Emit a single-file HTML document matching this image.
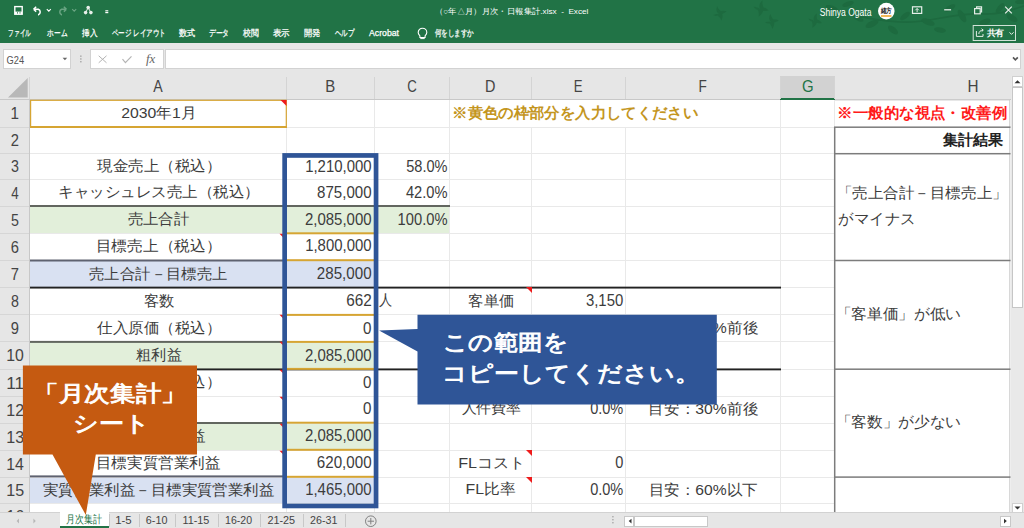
<!DOCTYPE html>
<html><head><meta charset="utf-8">
<style>
*{margin:0;padding:0;box-sizing:border-box}
html,body{width:1024px;height:528px;overflow:hidden;background:#fff}
body{position:relative;font-family:"Liberation Sans",sans-serif;color:#333}
.ab{position:absolute}
svg{position:absolute;left:0;top:0;overflow:visible}
</style></head><body>

<div class="ab" style="left:0px;top:0px;width:1024px;height:43px;background:#217346;"></div>
<svg width="1024" height="43" viewBox="0 0 1024 43">
<g fill="#1d6a3f"><path transform="translate(719,14) rotate(-20) scale(1.0)" d="M0 0 C -2 -3 -1 -6 1 -8 C 1 -5 2 -3 3 -2 C 5 -2 7 -1 8 0 C 6 1 4 1 3 1 C 3 3 2 5 0 7 C 0 4 -1 2 -2 1 C -4 1 -5 0 -6 -1 C -4 -1 -2 -1 0 0z"/><path transform="translate(760,9) rotate(10) scale(1.1)" d="M0 0 C -2 -3 -1 -6 1 -8 C 1 -5 2 -3 3 -2 C 5 -2 7 -1 8 0 C 6 1 4 1 3 1 C 3 3 2 5 0 7 C 0 4 -1 2 -2 1 C -4 1 -5 0 -6 -1 C -4 -1 -2 -1 0 0z"/><path transform="translate(771,22) rotate(-10) scale(1.0)" d="M0 0 C -2 -3 -1 -6 1 -8 C 1 -5 2 -3 3 -2 C 5 -2 7 -1 8 0 C 6 1 4 1 3 1 C 3 3 2 5 0 7 C 0 4 -1 2 -2 1 C -4 1 -5 0 -6 -1 C -4 -1 -2 -1 0 0z"/><path transform="translate(814,21) rotate(15) scale(1.0)" d="M0 0 C -2 -3 -1 -6 1 -8 C 1 -5 2 -3 3 -2 C 5 -2 7 -1 8 0 C 6 1 4 1 3 1 C 3 3 2 5 0 7 C 0 4 -1 2 -2 1 C -4 1 -5 0 -6 -1 C -4 -1 -2 -1 0 0z"/><path d="M826 6 C 845 14, 870 20, 900 22 C 930 24, 950 12, 985 14 C 1005 15, 1015 8, 1024 6" fill="none" stroke="#1d6a3f" stroke-width="1.6"/><ellipse cx="832" cy="8" rx="6" ry="2.5" transform="rotate(20 832 8)"/><ellipse cx="848" cy="4" rx="6" ry="2.5" transform="rotate(-20 848 4)"/><ellipse cx="858" cy="18" rx="6" ry="2.5" transform="rotate(30 858 18)"/><ellipse cx="872" cy="24" rx="7" ry="3" transform="rotate(-25 872 24)"/><ellipse cx="893" cy="30" rx="6" ry="3" transform="rotate(40 893 30)"/><ellipse cx="905" cy="16" rx="6" ry="2.5" transform="rotate(-40 905 16)"/><ellipse cx="928" cy="22" rx="7" ry="3" transform="rotate(20 928 22)"/><ellipse cx="950" cy="8" rx="6" ry="2.5" transform="rotate(-30 950 8)"/><ellipse cx="962" cy="16" rx="7" ry="3" transform="rotate(60 962 16)"/><ellipse cx="985" cy="22" rx="6" ry="3" transform="rotate(-20 985 22)"/><ellipse cx="1000" cy="8" rx="6" ry="2.5" transform="rotate(-50 1000 8)"/><ellipse cx="1012" cy="18" rx="6" ry="3" transform="rotate(30 1012 18)"/><ellipse cx="940" cy="30" rx="6" ry="2.5" transform="rotate(10 940 30)"/><ellipse cx="1020" cy="2" rx="5" ry="2" transform="rotate(0 1020 2)"/></g>
</svg>
<svg width="130" height="22" viewBox="0 0 130 22">
<rect x="14.8" y="6.6" width="7.4" height="7.6" fill="none" stroke="#fff" stroke-width="1.4"/>
<rect x="15" y="11.6" width="7" height="2.6" fill="#fff"/>
<rect x="17" y="12.3" width="1" height="1.2" fill="#217346"/><rect x="19.5" y="12.3" width="1" height="1.2" fill="#217346"/>
<path d="M33.5 9.2 L36.2 6.8 M33.5 9.2 L36.2 11.6 M33.6 9.2 H38.3 a3 3 0 0 1 0 5.6 H38" fill="none" stroke="#fff" stroke-width="1.5"/>
<path d="M46.8 9.2 l2 2 l2 -2" fill="none" stroke="#fff" stroke-width="1.1"/>
<path d="M66.5 9.2 L63.8 6.8 M66.5 9.2 L63.8 11.6 M66.4 9.2 H61.7 a3 3 0 0 0 0 5.6 H62" fill="none" stroke="#6aa583" stroke-width="1.5"/>
<path d="M72.2 9.2 l2 2 l2 -2" fill="none" stroke="#6aa583" stroke-width="1.1"/>
<g fill="#e8f0ea"><circle cx="88.2" cy="7.6" r="1.8"/><circle cx="85.6" cy="12.6" r="1.8"/><circle cx="90.9" cy="12.6" r="1.8"/></g>
<path d="M88.2 7.6 L85.6 12.6 M88.2 7.6 L90.9 12.6" stroke="#e8f0ea" stroke-width="1"/>
<rect x="105.3" y="10" width="3" height="1" fill="#cfe0d5"/><rect x="105.3" y="11.6" width="3" height="1.6" fill="#fff"/>
</svg>
<svg width="1024" height="43" viewBox="0 0 1024 43">
<circle cx="886.3" cy="11.1" r="8.3" fill="#fff"/>
<rect x="881" y="15.2" width="10.5" height="1.6" fill="#f0a830"/>
<rect x="912.5" y="6.8" width="9.2" height="6.6" fill="none" stroke="#e6efe9" stroke-width="1.2"/>
<path d="M917.1 12.2 V8.6 M915.3 10.3 L917.1 8.5 L918.9 10.3" fill="none" stroke="#e6efe9" stroke-width="1"/>
<path d="M944.2 9.8 H951.1" stroke="#e6efe9" stroke-width="1.3"/>
<rect x="974.6" y="8.6" width="5.6" height="5.2" fill="none" stroke="#e6efe9" stroke-width="1.2"/>
<path d="M976.6 8.4 V6.9 H981.6 V11.9 H980.4" fill="none" stroke="#e6efe9" stroke-width="1.1"/>
<path d="M1005.2 6.6 L1011.8 13.4 M1011.8 6.6 L1005.2 13.4" stroke="#e6efe9" stroke-width="1.2"/>
<rect x="973.2" y="25.5" width="42.3" height="15" fill="none" stroke="#d0e2d7" stroke-width="1"/>
<path d="M976.4 31 V36.4 H983 V34" fill="none" stroke="#e6efe9" stroke-width="1"/>
<path d="M978.8 34 C 979 31.5 980.5 30.2 983.2 30.2 M981.6 28.7 L983.2 30.2 L981.6 31.7" fill="none" stroke="#e6efe9" stroke-width="1"/>
<path d="M1009.5 32.3 L1011.5 34.4 L1013.6 32.3" fill="none" stroke="#e6efe9" stroke-width="1"/>
<path d="M418.5 28.2 a4.3 4.3 0 0 1 4.3 4.3 c0 1.6 -1 2.6 -1.7 3.4 v1.6 h-5.2 v-1.6 c-0.7 -0.8 -1.7 -1.8 -1.7 -3.4 a4.3 4.3 0 0 1 4.3 -4.3z" fill="none" stroke="#fff" stroke-width="1.1" transform="translate(4,0)"/>
<path d="M420.3 38.6 h4.4" stroke="#fff" stroke-width="1"/>
</svg>
<div class="ab" style="left:0px;top:43px;width:1024px;height:33px;background:#e6e6e6;"></div>
<div class="ab" style="left:3px;top:49px;width:68px;height:20px;background:#fff;border:1px solid #d2d2d2"></div>
<svg width="100" height="76" viewBox="0 0 100 76"><path d="M62.6 57.8 H67.2 L64.9 60.3z" fill="#666"/><rect x="80.2" y="55.5" width="1.3" height="1.3" fill="#9a9a9a"/><rect x="80.2" y="58.3" width="1.3" height="1.3" fill="#9a9a9a"/><rect x="80.2" y="61.1" width="1.3" height="1.3" fill="#9a9a9a"/></svg>
<div class="ab" style="left:90px;top:49px;width:74px;height:20px;background:#fff;border:1px solid #d2d2d2"></div>
<svg width="180" height="76" viewBox="0 0 180 76">
<path d="M98.7 55.8 L106.5 62.8 M106.5 55.8 L98.7 62.8" stroke="#b4b4b4" stroke-width="1"/>
<path d="M122.5 59.2 L125.4 62.6 L131.5 56.3" fill="none" stroke="#b4b4b4" stroke-width="1.2"/>
</svg>
<div class="ab" style="left:165px;top:49px;width:856px;height:20px;background:#fff;border:1px solid #d2d2d2"></div>
<svg width="1024" height="76" viewBox="0 0 1024 76"><path d="M1013 57.4 L1015.4 59.9 L1017.8 57.4" fill="none" stroke="#555" stroke-width="1.6"/></svg>
<div class="ab" style="left:0px;top:76px;width:1011px;height:23px;background:#e6e6e6;"></div>
<div class="ab" style="left:0px;top:99px;width:1011px;height:1px;background:#c8c8c8;"></div>
<svg width="30" height="100" viewBox="0 0 30 100"><path d="M8 97.5 L27.7 97.5 L27.7 78z" fill="#b8b8b8"/></svg>
<div class="ab" style="left:780px;top:76px;width:55px;height:23px;background:#d2d2d2;"></div>
<div class="ab" style="left:780px;top:98px;width:55px;height:2px;background:#217346;"></div>
<div class="ab" style="left:286px;top:77px;width:1px;height:22px;background:#d4d4d4;"></div>
<div class="ab" style="left:374px;top:77px;width:1px;height:22px;background:#d4d4d4;"></div>
<div class="ab" style="left:449px;top:77px;width:1px;height:22px;background:#d4d4d4;"></div>
<div class="ab" style="left:531px;top:77px;width:1px;height:22px;background:#d4d4d4;"></div>
<div class="ab" style="left:625px;top:77px;width:1px;height:22px;background:#d4d4d4;"></div>
<div class="ab" style="left:780px;top:77px;width:1px;height:22px;background:#d4d4d4;"></div>
<div class="ab" style="left:834px;top:77px;width:1px;height:22px;background:#d4d4d4;"></div>
<div class="ab" style="left:29px;top:77px;width:1px;height:22px;background:#d4d4d4;"></div>
<div class="ab" style="left:0px;top:100px;width:30px;height:412px;background:#e6e6e6;"></div>
<div class="ab" style="left:29px;top:100px;width:1px;height:412px;background:#c8c8c8;"></div>
<div class="ab" style="left:0px;top:127px;width:29px;height:1px;background:#d6d6d6;"></div>
<div class="ab" style="left:0px;top:153px;width:29px;height:1px;background:#d6d6d6;"></div>
<div class="ab" style="left:0px;top:179px;width:29px;height:1px;background:#d6d6d6;"></div>
<div class="ab" style="left:0px;top:206px;width:29px;height:1px;background:#d6d6d6;"></div>
<div class="ab" style="left:0px;top:233px;width:29px;height:1px;background:#d6d6d6;"></div>
<div class="ab" style="left:0px;top:260px;width:29px;height:1px;background:#d6d6d6;"></div>
<div class="ab" style="left:0px;top:287px;width:29px;height:1px;background:#d6d6d6;"></div>
<div class="ab" style="left:0px;top:314px;width:29px;height:1px;background:#d6d6d6;"></div>
<div class="ab" style="left:0px;top:341px;width:29px;height:1px;background:#d6d6d6;"></div>
<div class="ab" style="left:0px;top:369px;width:29px;height:1px;background:#d6d6d6;"></div>
<div class="ab" style="left:0px;top:396px;width:29px;height:1px;background:#d6d6d6;"></div>
<div class="ab" style="left:0px;top:423px;width:29px;height:1px;background:#d6d6d6;"></div>
<div class="ab" style="left:0px;top:450px;width:29px;height:1px;background:#d6d6d6;"></div>
<div class="ab" style="left:0px;top:477px;width:29px;height:1px;background:#d6d6d6;"></div>
<div class="ab" style="left:0px;top:503px;width:29px;height:1px;background:#d6d6d6;"></div>
<div class="ab" style="left:30px;top:100px;width:980px;height:412px;background:#fff;"></div>
<div class="ab" style="left:30px;top:207px;width:419px;height:26px;background:#e2efda;"></div>
<div class="ab" style="left:30px;top:261px;width:344px;height:26px;background:#d9e1f2;"></div>
<div class="ab" style="left:30px;top:342px;width:344px;height:27px;background:#e2efda;"></div>
<div class="ab" style="left:30px;top:424px;width:344px;height:26px;background:#e2efda;"></div>
<div class="ab" style="left:30px;top:478px;width:344px;height:25px;background:#d9e1f2;"></div>
<div class="ab" style="left:30px;top:127px;width:980px;height:1px;background:#e9e9e9;"></div>
<div class="ab" style="left:30px;top:153px;width:980px;height:1px;background:#e9e9e9;"></div>
<div class="ab" style="left:30px;top:179px;width:980px;height:1px;background:#e9e9e9;"></div>
<div class="ab" style="left:30px;top:206px;width:980px;height:1px;background:#e9e9e9;"></div>
<div class="ab" style="left:30px;top:233px;width:980px;height:1px;background:#e9e9e9;"></div>
<div class="ab" style="left:30px;top:260px;width:980px;height:1px;background:#e9e9e9;"></div>
<div class="ab" style="left:30px;top:287px;width:980px;height:1px;background:#e9e9e9;"></div>
<div class="ab" style="left:30px;top:314px;width:980px;height:1px;background:#e9e9e9;"></div>
<div class="ab" style="left:30px;top:341px;width:980px;height:1px;background:#e9e9e9;"></div>
<div class="ab" style="left:30px;top:369px;width:980px;height:1px;background:#e9e9e9;"></div>
<div class="ab" style="left:30px;top:396px;width:980px;height:1px;background:#e9e9e9;"></div>
<div class="ab" style="left:30px;top:423px;width:980px;height:1px;background:#e9e9e9;"></div>
<div class="ab" style="left:30px;top:450px;width:980px;height:1px;background:#e9e9e9;"></div>
<div class="ab" style="left:30px;top:477px;width:980px;height:1px;background:#e9e9e9;"></div>
<div class="ab" style="left:30px;top:503px;width:980px;height:1px;background:#e9e9e9;"></div>
<div class="ab" style="left:286px;top:100px;width:1px;height:412px;background:#e9e9e9;"></div>
<div class="ab" style="left:374px;top:100px;width:1px;height:412px;background:#e9e9e9;"></div>
<div class="ab" style="left:449px;top:100px;width:1px;height:412px;background:#e9e9e9;"></div>
<div class="ab" style="left:531px;top:127px;width:1px;height:385px;background:#e9e9e9;"></div>
<div class="ab" style="left:625px;top:127px;width:1px;height:385px;background:#e9e9e9;"></div>
<div class="ab" style="left:780px;top:100px;width:1px;height:412px;background:#e9e9e9;"></div>
<div class="ab" style="left:834px;top:100px;width:1px;height:412px;background:#e9e9e9;"></div>
<div class="ab" style="left:835px;top:100px;width:175px;height:412px;background:#fff;"></div>
<svg width="1024" height="528" viewBox="0 0 1024 528"><rect x="30" y="205.00" width="420" height="2" fill="#62665f"/><rect x="30" y="259.50" width="256" height="2" fill="#5f6270"/><rect x="30" y="286.65" width="751" height="1.9" fill="#222222"/><rect x="30" y="340.90" width="256" height="2" fill="#62665f"/><rect x="30" y="368.45" width="751" height="1.9" fill="#222222"/><rect x="30" y="422.00" width="256" height="2" fill="#62665f"/><rect x="30" y="475.40" width="256" height="2" fill="#5f6270"/><rect x="287" y="232.30" width="87" height="2" fill="#d6a533"/><rect x="287" y="259.20" width="87" height="2" fill="#d6a533"/><rect x="287" y="313.90" width="87" height="2" fill="#d6a533"/><rect x="287" y="340.90" width="87" height="2" fill="#d6a533"/><rect x="287" y="367.90" width="87" height="2" fill="#d6a533"/><rect x="287" y="421.70" width="87" height="2" fill="#d6a533"/><rect x="287" y="448.80" width="87" height="2" fill="#d6a533"/><rect x="287" y="475.80" width="87" height="2" fill="#d6a533"/><rect x="30" y="99.70" width="257" height="1.2" fill="#d6a533"/><rect x="30" y="126.00" width="257" height="2" fill="#d6a533"/><rect x="30.00" y="100" width="1.2" height="28" fill="#d6a533"/><rect x="285.70" y="100" width="1.2" height="28" fill="#d6a533"/><rect x="835" y="99.50" width="175" height="1" fill="#d0d0d0"/><rect x="1009.30" y="100" width="1" height="412" fill="#c8c8c8"/><rect x="834" y="126.45" width="176.5" height="1.5" fill="#7c7c7c"/><rect x="834" y="152.95" width="176.5" height="1.5" fill="#7c7c7c"/><rect x="834" y="259.75" width="176.5" height="1.5" fill="#7c7c7c"/><rect x="834" y="368.45" width="176.5" height="1.5" fill="#7c7c7c"/><rect x="834" y="476.35" width="176.5" height="1.5" fill="#7c7c7c"/><rect x="833.95" y="127" width="1.5" height="385" fill="#7c7c7c"/></svg>
<svg width="1024" height="528" viewBox="0 0 1024 528"><path d="M280.5 100 H286.5 V106z" fill="#ee1c1c"/><path d="M279.5 233.8 H285.5 V239.8z" fill="#ee1c1c"/><path d="M279.5 314.8 H285.5 V320.8z" fill="#ee1c1c"/><path d="M279.5 341.8 H285.5 V347.8z" fill="#ee1c1c"/><path d="M279.5 369.8 H285.5 V375.8z" fill="#ee1c1c"/><path d="M279.5 396.8 H285.5 V402.8z" fill="#ee1c1c"/><path d="M279.5 423.8 H285.5 V429.8z" fill="#ee1c1c"/><path d="M279.5 450.8 H285.5 V456.8z" fill="#ee1c1c"/><path d="M526 287 H532 V293z" fill="#ee1c1c"/><path d="M526 450 H532 V456z" fill="#ee1c1c"/><path d="M526 477 H532 V483z" fill="#ee1c1c"/></svg>
<div class="ab" style="left:1011px;top:76px;width:13px;height:436px;background:#e9e9e9;"></div>
<div class="ab" style="left:1012px;top:76px;width:11px;height:11px;background:#fff;border:1px solid #d0d0d0"></div>
<div class="ab" style="left:1012px;top:87px;width:11px;height:221px;background:#fff;border:1px solid #c6c6c6"></div>
<div class="ab" style="left:1012px;top:503px;width:11px;height:10px;background:#fff;border:1px solid #d0d0d0"></div>
<svg width="1024" height="528" viewBox="0 0 1024 528"><path d="M1014.5 83.2 H1020.5 L1017.5 80.2z" fill="#333"/><path d="M1014.5 506.5 H1020.5 L1017.5 509.5z" fill="#333"/></svg>
<div class="ab" style="left:0px;top:512px;width:1024px;height:16px;background:#e6e6e6;"></div>
<div class="ab" style="left:0px;top:512px;width:1024px;height:1px;background:#d2d2d2;"></div>
<div class="ab" style="left:60px;top:512px;width:49px;height:16px;background:#fff;"></div>
<div class="ab" style="left:60px;top:526px;width:49px;height:2px;background:#217346;"></div>
<div class="ab" style="left:109px;top:514px;width:1px;height:13px;background:#c8c8c8;"></div>
<div class="ab" style="left:139px;top:514px;width:1px;height:13px;background:#c8c8c8;"></div>
<div class="ab" style="left:175px;top:514px;width:1px;height:13px;background:#c8c8c8;"></div>
<div class="ab" style="left:218px;top:514px;width:1px;height:13px;background:#c8c8c8;"></div>
<div class="ab" style="left:260px;top:514px;width:1px;height:13px;background:#c8c8c8;"></div>
<div class="ab" style="left:303px;top:514px;width:1px;height:13px;background:#c8c8c8;"></div>
<div class="ab" style="left:345px;top:514px;width:1px;height:13px;background:#c8c8c8;"></div>
<svg width="1024" height="528" viewBox="0 0 1024 528">
<path d="M19 518.6 V523.4 L16.6 521z M33.4 518.6 V523.4 L35.8 521z" fill="#b8b8b8"/>
<circle cx="370.8" cy="521.2" r="5.3" fill="none" stroke="#808080" stroke-width="1"/>
<path d="M370.8 518 V524.4 M367.6 521.2 H374" stroke="#808080" stroke-width="1"/>
<rect x="612.2" y="516" width="1.4" height="1.4" fill="#a8a8a8"/><rect x="612.2" y="519" width="1.4" height="1.4" fill="#a8a8a8"/><rect x="612.2" y="522" width="1.4" height="1.4" fill="#a8a8a8"/>
<path d="M631.5 518.5 V523.5 L628.5 521z" fill="#333"/>
<path d="M1003.5 518.5 V523.5 L1006.5 521z" fill="#333"/>
</svg>
<div class="ab" style="left:624px;top:516px;width:10px;height:11px;background:#fff;border:1px solid #c8c8c8"></div>
<div class="ab" style="left:634px;top:516px;width:74px;height:11px;background:#fff;border:1px solid #c8c8c8"></div>
<div class="ab" style="left:1000px;top:516px;width:11px;height:11px;background:#fff;border:1px solid #c8c8c8"></div>
<svg width="1024" height="528" viewBox="0 0 1024 528"><path d="M631.5 518.8 V523.4 L628.7 521.1z" fill="#333"/><path d="M1004 518.8 V523.4 L1006.8 521.1z" fill="#333"/></svg>
<svg width="1024" height="528" viewBox="0 0 1024 528"><defs><clipPath id="c16"><rect x="0" y="503" width="30" height="9"/></clipPath></defs><text x="8.29" y="35.66" textLength="22.53" lengthAdjust="spacingAndGlyphs" style="font-family:'Liberation Sans', sans-serif;font-size:8.60px;fill:#ffffff;stroke:#ffffff;stroke-width:0.25" xml:space="preserve">ファイル</text><text x="47.30" y="35.66" textLength="20.06" lengthAdjust="spacingAndGlyphs" style="font-family:'Liberation Sans', sans-serif;font-size:8.60px;fill:#ffffff;stroke:#ffffff;stroke-width:0.25" xml:space="preserve">ホーム</text><text x="82.00" y="35.66" textLength="15.23" lengthAdjust="spacingAndGlyphs" style="font-family:'Liberation Sans', sans-serif;font-size:8.60px;fill:#ffffff;stroke:#ffffff;stroke-width:0.25" xml:space="preserve">挿入</text><text x="111.90" y="35.66" textLength="53.72" lengthAdjust="spacingAndGlyphs" style="font-family:'Liberation Sans', sans-serif;font-size:8.60px;fill:#ffffff;stroke:#ffffff;stroke-width:0.25" xml:space="preserve">ページ レイアウト</text><text x="178.70" y="35.66" textLength="16.24" lengthAdjust="spacingAndGlyphs" style="font-family:'Liberation Sans', sans-serif;font-size:8.60px;fill:#ffffff;stroke:#ffffff;stroke-width:0.25" xml:space="preserve">数式</text><text x="208.70" y="35.66" textLength="20.50" lengthAdjust="spacingAndGlyphs" style="font-family:'Liberation Sans', sans-serif;font-size:8.60px;fill:#ffffff;stroke:#ffffff;stroke-width:0.25" xml:space="preserve">データ</text><text x="242.74" y="35.66" textLength="15.75" lengthAdjust="spacingAndGlyphs" style="font-family:'Liberation Sans', sans-serif;font-size:8.60px;fill:#ffffff;stroke:#ffffff;stroke-width:0.25" xml:space="preserve">校閲</text><text x="272.77" y="35.66" textLength="16.98" lengthAdjust="spacingAndGlyphs" style="font-family:'Liberation Sans', sans-serif;font-size:8.60px;fill:#ffffff;stroke:#ffffff;stroke-width:0.25" xml:space="preserve">表示</text><text x="304.23" y="35.66" textLength="16.44" lengthAdjust="spacingAndGlyphs" style="font-family:'Liberation Sans', sans-serif;font-size:8.60px;fill:#ffffff;stroke:#ffffff;stroke-width:0.25" xml:space="preserve">開発</text><text x="335.00" y="35.66" textLength="19.44" lengthAdjust="spacingAndGlyphs" style="font-family:'Liberation Sans', sans-serif;font-size:8.60px;fill:#ffffff;stroke:#ffffff;stroke-width:0.25" xml:space="preserve">ヘルプ</text><text x="369.00" y="35.66" textLength="29.97" lengthAdjust="spacingAndGlyphs" style="font-family:'Liberation Sans', sans-serif;font-size:8.60px;fill:#ffffff;stroke:#ffffff;stroke-width:0.25" xml:space="preserve">Acrobat</text><text x="434.50" y="35.66" textLength="39.24" lengthAdjust="spacingAndGlyphs" style="font-family:'Liberation Sans', sans-serif;font-size:8.60px;fill:#ffffff;stroke:#ffffff;stroke-width:0.25" xml:space="preserve">何をしますか</text><text x="434.99" y="14.46" textLength="153.35" lengthAdjust="spacingAndGlyphs" style="font-family:'Liberation Sans', sans-serif;font-size:7.80px;fill:#ffffff" xml:space="preserve">（○年△月）月次・日報集計.xlsx  -  Excel</text><text x="819.73" y="15.52" textLength="51.71" lengthAdjust="spacingAndGlyphs" style="font-family:'Liberation Sans', sans-serif;font-size:10.00px;fill:#ffffff" xml:space="preserve">Shinya Ogata</text><text x="986.65" y="36.14" textLength="17.68" lengthAdjust="spacingAndGlyphs" style="font-family:'Liberation Sans', sans-serif;font-size:9.20px;fill:#ffffff;font-weight:bold" xml:space="preserve">共有</text><text x="880.69" y="13.33" textLength="11.40" lengthAdjust="spacingAndGlyphs" style="font-family:'Liberation Sans', sans-serif;font-size:6.50px;fill:#222222;font-weight:bold" xml:space="preserve">緒方</text><text x="6.56" y="63.99" textLength="17.57" lengthAdjust="spacingAndGlyphs" style="font-family:'Liberation Sans', sans-serif;font-size:11.20px;fill:#555555" xml:space="preserve">G24</text><text x="146.00" y="63.09" textLength="9.28" lengthAdjust="spacingAndGlyphs" style="font-family:'Liberation Serif', serif;font-size:11.50px;fill:#666666;font-style:italic" xml:space="preserve">fx</text><text x="153.25" y="92.40" textLength="9.43" lengthAdjust="spacingAndGlyphs" style="font-family:'Liberation Sans', sans-serif;font-size:16.20px;fill:#444444" xml:space="preserve">A</text><text x="325.23" y="92.40" textLength="10.00" lengthAdjust="spacingAndGlyphs" style="font-family:'Liberation Sans', sans-serif;font-size:16.20px;fill:#444444" xml:space="preserve">B</text><text x="407.13" y="92.40" textLength="9.58" lengthAdjust="spacingAndGlyphs" style="font-family:'Liberation Sans', sans-serif;font-size:16.20px;fill:#444444" xml:space="preserve">C</text><text x="484.97" y="92.40" textLength="10.43" lengthAdjust="spacingAndGlyphs" style="font-family:'Liberation Sans', sans-serif;font-size:16.20px;fill:#444444" xml:space="preserve">D</text><text x="573.87" y="92.40" textLength="8.78" lengthAdjust="spacingAndGlyphs" style="font-family:'Liberation Sans', sans-serif;font-size:16.20px;fill:#444444" xml:space="preserve">E</text><text x="698.54" y="92.40" textLength="8.31" lengthAdjust="spacingAndGlyphs" style="font-family:'Liberation Sans', sans-serif;font-size:16.20px;fill:#444444" xml:space="preserve">F</text><text x="801.90" y="92.40" textLength="11.62" lengthAdjust="spacingAndGlyphs" style="font-family:'Liberation Sans', sans-serif;font-size:16.20px;fill:#217346" xml:space="preserve">G</text><text x="967.51" y="92.40" textLength="11.04" lengthAdjust="spacingAndGlyphs" style="font-family:'Liberation Sans', sans-serif;font-size:16.20px;fill:#444444" xml:space="preserve">H</text><text x="10.55" y="119.21" textLength="8.47" lengthAdjust="spacingAndGlyphs" style="font-family:'Liberation Sans', sans-serif;font-size:16.60px;fill:#444444" xml:space="preserve">1</text><text x="10.81" y="146.21" textLength="8.19" lengthAdjust="spacingAndGlyphs" style="font-family:'Liberation Sans', sans-serif;font-size:16.60px;fill:#444444" xml:space="preserve">2</text><text x="11.05" y="172.21" textLength="7.92" lengthAdjust="spacingAndGlyphs" style="font-family:'Liberation Sans', sans-serif;font-size:16.60px;fill:#444444" xml:space="preserve">3</text><text x="11.29" y="198.71" textLength="7.44" lengthAdjust="spacingAndGlyphs" style="font-family:'Liberation Sans', sans-serif;font-size:16.60px;fill:#444444" xml:space="preserve">4</text><text x="11.05" y="225.71" textLength="7.92" lengthAdjust="spacingAndGlyphs" style="font-family:'Liberation Sans', sans-serif;font-size:16.60px;fill:#444444" xml:space="preserve">5</text><text x="10.81" y="252.71" textLength="8.19" lengthAdjust="spacingAndGlyphs" style="font-family:'Liberation Sans', sans-serif;font-size:16.60px;fill:#444444" xml:space="preserve">6</text><text x="10.81" y="279.71" textLength="8.19" lengthAdjust="spacingAndGlyphs" style="font-family:'Liberation Sans', sans-serif;font-size:16.60px;fill:#444444" xml:space="preserve">7</text><text x="11.05" y="306.71" textLength="7.92" lengthAdjust="spacingAndGlyphs" style="font-family:'Liberation Sans', sans-serif;font-size:16.60px;fill:#444444" xml:space="preserve">8</text><text x="10.81" y="333.71" textLength="8.19" lengthAdjust="spacingAndGlyphs" style="font-family:'Liberation Sans', sans-serif;font-size:16.60px;fill:#444444" xml:space="preserve">9</text><text x="6.31" y="361.21" textLength="17.58" lengthAdjust="spacingAndGlyphs" style="font-family:'Liberation Sans', sans-serif;font-size:16.60px;fill:#444444" xml:space="preserve">10</text><text x="6.22" y="388.71" textLength="17.98" lengthAdjust="spacingAndGlyphs" style="font-family:'Liberation Sans', sans-serif;font-size:16.60px;fill:#444444" xml:space="preserve">11</text><text x="6.30" y="415.71" textLength="17.85" lengthAdjust="spacingAndGlyphs" style="font-family:'Liberation Sans', sans-serif;font-size:16.60px;fill:#444444" xml:space="preserve">12</text><text x="6.30" y="442.71" textLength="17.85" lengthAdjust="spacingAndGlyphs" style="font-family:'Liberation Sans', sans-serif;font-size:16.60px;fill:#444444" xml:space="preserve">13</text><text x="6.31" y="469.71" textLength="17.58" lengthAdjust="spacingAndGlyphs" style="font-family:'Liberation Sans', sans-serif;font-size:16.60px;fill:#444444" xml:space="preserve">14</text><text x="6.30" y="496.21" textLength="17.85" lengthAdjust="spacingAndGlyphs" style="font-family:'Liberation Sans', sans-serif;font-size:16.60px;fill:#444444" xml:space="preserve">15</text><g clip-path="url(#c16)"><text x="6.30" y="521.51" textLength="17.85" lengthAdjust="spacingAndGlyphs" style="font-family:'Liberation Sans', sans-serif;font-size:16.60px;fill:#444444" xml:space="preserve">16</text></g><text x="121.26" y="118.10" textLength="75.16" lengthAdjust="spacingAndGlyphs" style="font-family:'Liberation Sans', sans-serif;font-size:15.10px;fill:#3c3c3c" xml:space="preserve">2030年1月</text><text x="97.00" y="171.10" textLength="124.18" lengthAdjust="spacingAndGlyphs" style="font-family:'Liberation Sans', sans-serif;font-size:15.10px;fill:#3c3c3c" xml:space="preserve">現金売上（税込）</text><text x="58.08" y="196.98" textLength="201.73" lengthAdjust="spacingAndGlyphs" style="font-family:'Liberation Sans', sans-serif;font-size:15.10px;fill:#3c3c3c" xml:space="preserve">キャッシュレス売上（税込）</text><text x="127.54" y="224.48" textLength="61.68" lengthAdjust="spacingAndGlyphs" style="font-family:'Liberation Sans', sans-serif;font-size:15.10px;fill:#3c3c3c" xml:space="preserve">売上合計</text><text x="95.80" y="251.10" textLength="125.48" lengthAdjust="spacingAndGlyphs" style="font-family:'Liberation Sans', sans-serif;font-size:15.10px;fill:#3c3c3c" xml:space="preserve">目標売上（税込）</text><text x="89.04" y="278.98" textLength="138.42" lengthAdjust="spacingAndGlyphs" style="font-family:'Liberation Sans', sans-serif;font-size:15.10px;fill:#3c3c3c" xml:space="preserve">売上合計－目標売上</text><text x="143.52" y="306.35" textLength="30.46" lengthAdjust="spacingAndGlyphs" style="font-family:'Liberation Sans', sans-serif;font-size:15.10px;fill:#3c3c3c" xml:space="preserve">客数</text><text x="97.27" y="333.23" textLength="123.89" lengthAdjust="spacingAndGlyphs" style="font-family:'Liberation Sans', sans-serif;font-size:15.10px;fill:#3c3c3c" xml:space="preserve">仕入原価（税込）</text><text x="136.25" y="360.48" textLength="45.45" lengthAdjust="spacingAndGlyphs" style="font-family:'Liberation Sans', sans-serif;font-size:15.10px;fill:#3c3c3c" xml:space="preserve">粗利益</text><text x="97.00" y="387.10" textLength="124.18" lengthAdjust="spacingAndGlyphs" style="font-family:'Liberation Sans', sans-serif;font-size:15.10px;fill:#3c3c3c" xml:space="preserve">人件費等（税込）</text><text x="118.80" y="414.10" textLength="77.89" lengthAdjust="spacingAndGlyphs" style="font-family:'Liberation Sans', sans-serif;font-size:15.10px;fill:#3c3c3c" xml:space="preserve">その他経費</text><text x="111.53" y="441.10" textLength="93.94" lengthAdjust="spacingAndGlyphs" style="font-family:'Liberation Sans', sans-serif;font-size:15.10px;fill:#3c3c3c" xml:space="preserve">実質営業利益</text><text x="95.82" y="468.35" textLength="124.65" lengthAdjust="spacingAndGlyphs" style="font-family:'Liberation Sans', sans-serif;font-size:15.10px;fill:#3c3c3c" xml:space="preserve">目標実質営業利益</text><text x="42.54" y="495.23" textLength="231.68" lengthAdjust="spacingAndGlyphs" style="font-family:'Liberation Sans', sans-serif;font-size:15.10px;fill:#3c3c3c" xml:space="preserve">実質営業利益－目標実質営業利益</text><text x="305.17" y="171.60" textLength="66.40" lengthAdjust="spacingAndGlyphs" style="font-family:'Liberation Sans', sans-serif;font-size:15.70px;fill:#3c3c3c" xml:space="preserve">1,210,000</text><text x="317.03" y="198.20" textLength="54.55" lengthAdjust="spacingAndGlyphs" style="font-family:'Liberation Sans', sans-serif;font-size:15.70px;fill:#3c3c3c" xml:space="preserve">875,000</text><text x="304.90" y="225.15" textLength="66.68" lengthAdjust="spacingAndGlyphs" style="font-family:'Liberation Sans', sans-serif;font-size:15.70px;fill:#3c3c3c" xml:space="preserve">2,085,000</text><text x="305.17" y="251.45" textLength="66.40" lengthAdjust="spacingAndGlyphs" style="font-family:'Liberation Sans', sans-serif;font-size:15.70px;fill:#3c3c3c" xml:space="preserve">1,800,000</text><text x="316.79" y="278.60" textLength="54.79" lengthAdjust="spacingAndGlyphs" style="font-family:'Liberation Sans', sans-serif;font-size:15.70px;fill:#3c3c3c" xml:space="preserve">285,000</text><text x="346.28" y="306.15" textLength="25.54" lengthAdjust="spacingAndGlyphs" style="font-family:'Liberation Sans', sans-serif;font-size:15.70px;fill:#3c3c3c" xml:space="preserve">662</text><text x="363.12" y="333.65" textLength="8.45" lengthAdjust="spacingAndGlyphs" style="font-family:'Liberation Sans', sans-serif;font-size:15.70px;fill:#3c3c3c" xml:space="preserve">0</text><text x="304.90" y="360.90" textLength="66.68" lengthAdjust="spacingAndGlyphs" style="font-family:'Liberation Sans', sans-serif;font-size:15.70px;fill:#3c3c3c" xml:space="preserve">2,085,000</text><text x="363.12" y="387.60" textLength="8.45" lengthAdjust="spacingAndGlyphs" style="font-family:'Liberation Sans', sans-serif;font-size:15.70px;fill:#3c3c3c" xml:space="preserve">0</text><text x="363.12" y="414.40" textLength="8.45" lengthAdjust="spacingAndGlyphs" style="font-family:'Liberation Sans', sans-serif;font-size:15.70px;fill:#3c3c3c" xml:space="preserve">0</text><text x="304.90" y="441.00" textLength="66.68" lengthAdjust="spacingAndGlyphs" style="font-family:'Liberation Sans', sans-serif;font-size:15.70px;fill:#3c3c3c" xml:space="preserve">2,085,000</text><text x="316.79" y="467.90" textLength="54.79" lengthAdjust="spacingAndGlyphs" style="font-family:'Liberation Sans', sans-serif;font-size:15.70px;fill:#3c3c3c" xml:space="preserve">620,000</text><text x="305.17" y="494.95" textLength="66.40" lengthAdjust="spacingAndGlyphs" style="font-family:'Liberation Sans', sans-serif;font-size:15.70px;fill:#3c3c3c" xml:space="preserve">1,465,000</text><text x="406.24" y="171.60" textLength="41.29" lengthAdjust="spacingAndGlyphs" style="font-family:'Liberation Sans', sans-serif;font-size:15.70px;fill:#3c3c3c" xml:space="preserve">58.0%</text><text x="405.97" y="198.20" textLength="41.57" lengthAdjust="spacingAndGlyphs" style="font-family:'Liberation Sans', sans-serif;font-size:15.70px;fill:#3c3c3c" xml:space="preserve">42.0%</text><text x="397.58" y="225.15" textLength="49.96" lengthAdjust="spacingAndGlyphs" style="font-family:'Liberation Sans', sans-serif;font-size:15.70px;fill:#3c3c3c" xml:space="preserve">100.0%</text><text x="378.90" y="305.45" textLength="13.20" lengthAdjust="spacingAndGlyphs" style="font-family:'Liberation Sans', sans-serif;font-size:15.10px;fill:#3c3c3c" xml:space="preserve">人</text><text x="452.17" y="117.95" textLength="246.00" lengthAdjust="spacingAndGlyphs" style="font-family:'Liberation Sans', sans-serif;font-size:15.30px;fill:#c4961f;font-weight:bold" xml:space="preserve">※黄色の枠部分を入力してください</text><text x="468.37" y="305.95" textLength="46.09" lengthAdjust="spacingAndGlyphs" style="font-family:'Liberation Sans', sans-serif;font-size:15.10px;fill:#3c3c3c" xml:space="preserve">客単価</text><text x="585.93" y="306.15" textLength="37.34" lengthAdjust="spacingAndGlyphs" style="font-family:'Liberation Sans', sans-serif;font-size:15.70px;fill:#3c3c3c" xml:space="preserve">3,150</text><text x="468.37" y="332.85" textLength="45.58" lengthAdjust="spacingAndGlyphs" style="font-family:'Liberation Sans', sans-serif;font-size:15.10px;fill:#3c3c3c" xml:space="preserve">原価率</text><text x="590.14" y="333.45" textLength="33.19" lengthAdjust="spacingAndGlyphs" style="font-family:'Liberation Sans', sans-serif;font-size:15.70px;fill:#3c3c3c" xml:space="preserve">0.0%</text><text x="648.41" y="333.15" textLength="109.77" lengthAdjust="spacingAndGlyphs" style="font-family:'Liberation Sans', sans-serif;font-size:15.10px;fill:#3c3c3c" xml:space="preserve">目安：30%前後</text><text x="461.50" y="413.25" textLength="59.75" lengthAdjust="spacingAndGlyphs" style="font-family:'Liberation Sans', sans-serif;font-size:15.10px;fill:#3c3c3c" xml:space="preserve">人件費率</text><text x="590.14" y="414.00" textLength="33.19" lengthAdjust="spacingAndGlyphs" style="font-family:'Liberation Sans', sans-serif;font-size:15.70px;fill:#3c3c3c" xml:space="preserve">0.0%</text><text x="648.41" y="413.80" textLength="109.77" lengthAdjust="spacingAndGlyphs" style="font-family:'Liberation Sans', sans-serif;font-size:15.10px;fill:#3c3c3c" xml:space="preserve">目安：30%前後</text><text x="458.16" y="467.60" textLength="67.13" lengthAdjust="spacingAndGlyphs" style="font-family:'Liberation Sans', sans-serif;font-size:15.10px;fill:#3c3c3c" xml:space="preserve">FLコスト</text><text x="615.14" y="468.05" textLength="8.12" lengthAdjust="spacingAndGlyphs" style="font-family:'Liberation Sans', sans-serif;font-size:15.70px;fill:#3c3c3c" xml:space="preserve">0</text><text x="465.47" y="494.30" textLength="50.01" lengthAdjust="spacingAndGlyphs" style="font-family:'Liberation Sans', sans-serif;font-size:15.10px;fill:#3c3c3c" xml:space="preserve">FL比率</text><text x="590.14" y="494.95" textLength="33.19" lengthAdjust="spacingAndGlyphs" style="font-family:'Liberation Sans', sans-serif;font-size:15.70px;fill:#3c3c3c" xml:space="preserve">0.0%</text><text x="648.62" y="494.85" textLength="109.15" lengthAdjust="spacingAndGlyphs" style="font-family:'Liberation Sans', sans-serif;font-size:15.10px;fill:#3c3c3c" xml:space="preserve">目安：60%以下</text><text x="837.34" y="117.88" textLength="169.82" lengthAdjust="spacingAndGlyphs" style="font-family:'Liberation Sans', sans-serif;font-size:15.10px;fill:#ff1a1a;font-weight:bold" xml:space="preserve">※一般的な視点・改善例</text><text x="943.16" y="144.73" textLength="60.24" lengthAdjust="spacingAndGlyphs" style="font-family:'Liberation Sans', sans-serif;font-size:15.10px;fill:#222222;font-weight:bold" xml:space="preserve">集計結果</text><text x="836.69" y="198.35" textLength="170.91" lengthAdjust="spacingAndGlyphs" style="font-family:'Liberation Sans', sans-serif;font-size:15.10px;fill:#3c3c3c" xml:space="preserve">「売上合計－目標売上」</text><text x="838.47" y="223.90" textLength="76.98" lengthAdjust="spacingAndGlyphs" style="font-family:'Liberation Sans', sans-serif;font-size:15.10px;fill:#3c3c3c" xml:space="preserve">がマイナス</text><text x="835.55" y="319.00" textLength="125.60" lengthAdjust="spacingAndGlyphs" style="font-family:'Liberation Sans', sans-serif;font-size:15.10px;fill:#3c3c3c" xml:space="preserve">「客単価」が低い</text><text x="835.58" y="427.25" textLength="125.57" lengthAdjust="spacingAndGlyphs" style="font-family:'Liberation Sans', sans-serif;font-size:15.10px;fill:#3c3c3c" xml:space="preserve">「客数」が少ない</text><text x="65.98" y="523.07" textLength="35.89" lengthAdjust="spacingAndGlyphs" style="font-family:'Liberation Sans', sans-serif;font-size:10.50px;fill:#217346" xml:space="preserve">月次集計</text><text x="115.19" y="523.76" textLength="16.53" lengthAdjust="spacingAndGlyphs" style="font-family:'Liberation Sans', sans-serif;font-size:10.20px;fill:#444444" xml:space="preserve">1-5</text><text x="145.89" y="523.76" textLength="21.57" lengthAdjust="spacingAndGlyphs" style="font-family:'Liberation Sans', sans-serif;font-size:10.20px;fill:#444444" xml:space="preserve">6-10</text><text x="182.42" y="523.76" textLength="26.92" lengthAdjust="spacingAndGlyphs" style="font-family:'Liberation Sans', sans-serif;font-size:10.20px;fill:#444444" xml:space="preserve">11-15</text><text x="225.14" y="523.76" textLength="26.92" lengthAdjust="spacingAndGlyphs" style="font-family:'Liberation Sans', sans-serif;font-size:10.20px;fill:#444444" xml:space="preserve">16-20</text><text x="267.49" y="523.76" textLength="27.64" lengthAdjust="spacingAndGlyphs" style="font-family:'Liberation Sans', sans-serif;font-size:10.20px;fill:#444444" xml:space="preserve">21-25</text><text x="310.00" y="523.76" textLength="27.33" lengthAdjust="spacingAndGlyphs" style="font-family:'Liberation Sans', sans-serif;font-size:10.20px;fill:#444444" xml:space="preserve">26-31</text></svg>
<svg width="1024" height="528" viewBox="0 0 1024 528"><rect x="284.65" y="155.45" width="91.4" height="350.5" fill="none" stroke="#2f5597" stroke-width="4.7"/></svg>
<svg width="1024" height="528" viewBox="0 0 1024 528">
<path d="M417.5 314.7 H716.8 V404.4 H417.5 V351.6 L379.1 330.6 L417.5 329.1z" fill="#2f5597"/>
<path d="M22.9 365.5 H197 V454.6 H95.8 L85.8 515 L52.5 454.6 H22.9z" fill="#c55a11"/>
<g stroke="#ffffff" stroke-width="0.9"><text x="442.94" y="350.05" textLength="125.54" lengthAdjust="spacingAndGlyphs" style="font-family:'Liberation Sans', sans-serif;font-size:21.80px;fill:#ffffff" xml:space="preserve">この範囲を</text><text x="442.05" y="380.80" textLength="257.92" lengthAdjust="spacingAndGlyphs" style="font-family:'Liberation Sans', sans-serif;font-size:21.80px;fill:#ffffff" xml:space="preserve">コピーしてください。</text><text x="33.25" y="400.66" textLength="153.40" lengthAdjust="spacingAndGlyphs" style="font-family:'Liberation Sans', sans-serif;font-size:21.50px;fill:#ffffff" xml:space="preserve">「月次集計」</text><text x="72.64" y="430.66" textLength="77.61" lengthAdjust="spacingAndGlyphs" style="font-family:'Liberation Sans', sans-serif;font-size:21.50px;fill:#ffffff" xml:space="preserve">シート</text></g></svg>
</body></html>
